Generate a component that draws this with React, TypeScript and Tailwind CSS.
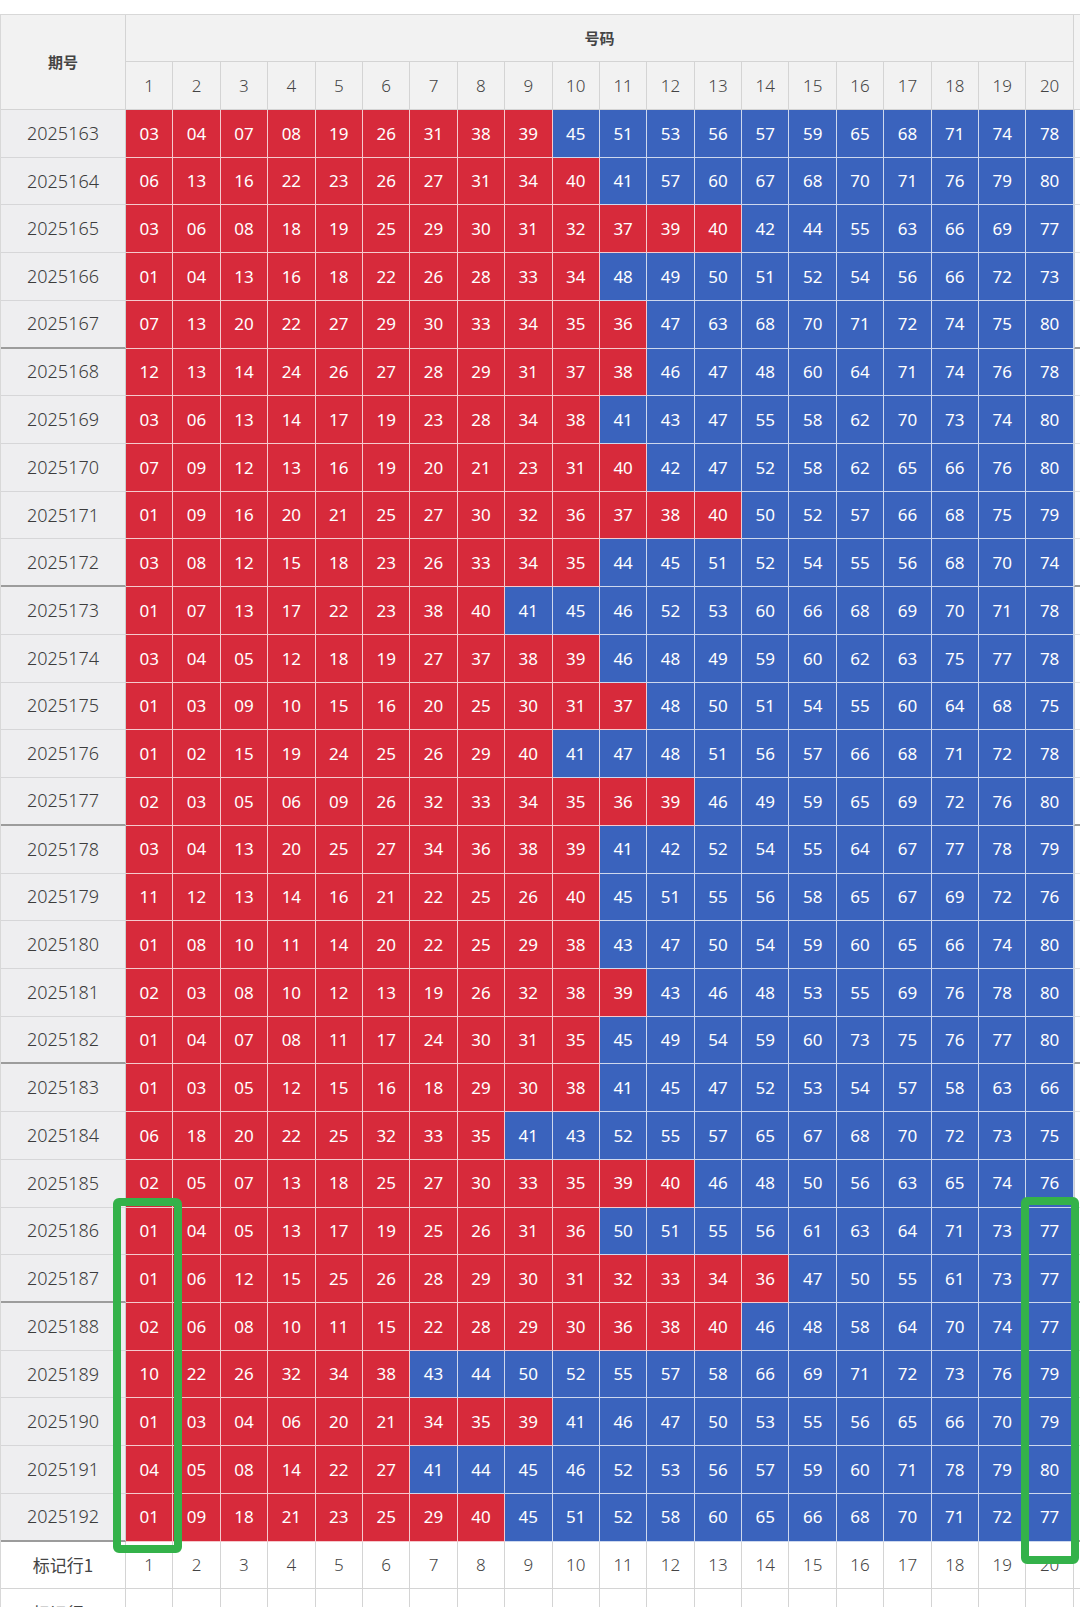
import React from "react";

const draws: [string, string][] = [
  ["2025163", "03 04 07 08 19 26 31 38 39 45 51 53 56 57 59 65 68 71 74 78"],
  ["2025164", "06 13 16 22 23 26 27 31 34 40 41 57 60 67 68 70 71 76 79 80"],
  ["2025165", "03 06 08 18 19 25 29 30 31 32 37 39 40 42 44 55 63 66 69 77"],
  ["2025166", "01 04 13 16 18 22 26 28 33 34 48 49 50 51 52 54 56 66 72 73"],
  ["2025167", "07 13 20 22 27 29 30 33 34 35 36 47 63 68 70 71 72 74 75 80"],
  ["2025168", "12 13 14 24 26 27 28 29 31 37 38 46 47 48 60 64 71 74 76 78"],
  ["2025169", "03 06 13 14 17 19 23 28 34 38 41 43 47 55 58 62 70 73 74 80"],
  ["2025170", "07 09 12 13 16 19 20 21 23 31 40 42 47 52 58 62 65 66 76 80"],
  ["2025171", "01 09 16 20 21 25 27 30 32 36 37 38 40 50 52 57 66 68 75 79"],
  ["2025172", "03 08 12 15 18 23 26 33 34 35 44 45 51 52 54 55 56 68 70 74"],
  ["2025173", "01 07 13 17 22 23 38 40 41 45 46 52 53 60 66 68 69 70 71 78"],
  ["2025174", "03 04 05 12 18 19 27 37 38 39 46 48 49 59 60 62 63 75 77 78"],
  ["2025175", "01 03 09 10 15 16 20 25 30 31 37 48 50 51 54 55 60 64 68 75"],
  ["2025176", "01 02 15 19 24 25 26 29 40 41 47 48 51 56 57 66 68 71 72 78"],
  ["2025177", "02 03 05 06 09 26 32 33 34 35 36 39 46 49 59 65 69 72 76 80"],
  ["2025178", "03 04 13 20 25 27 34 36 38 39 41 42 52 54 55 64 67 77 78 79"],
  ["2025179", "11 12 13 14 16 21 22 25 26 40 45 51 55 56 58 65 67 69 72 76"],
  ["2025180", "01 08 10 11 14 20 22 25 29 38 43 47 50 54 59 60 65 66 74 80"],
  ["2025181", "02 03 08 10 12 13 19 26 32 38 39 43 46 48 53 55 69 76 78 80"],
  ["2025182", "01 04 07 08 11 17 24 30 31 35 45 49 54 59 60 73 75 76 77 80"],
  ["2025183", "01 03 05 12 15 16 18 29 30 38 41 45 47 52 53 54 57 58 63 66"],
  ["2025184", "06 18 20 22 25 32 33 35 41 43 52 55 57 65 67 68 70 72 73 75"],
  ["2025185", "02 05 07 13 18 25 27 30 33 35 39 40 46 48 50 56 63 65 74 76"],
  ["2025186", "01 04 05 13 17 19 25 26 31 36 50 51 55 56 61 63 64 71 73 77"],
  ["2025187", "01 06 12 15 25 26 28 29 30 31 32 33 34 36 47 50 55 61 73 77"],
  ["2025188", "02 06 08 10 11 15 22 28 29 30 36 38 40 46 48 58 64 70 74 77"],
  ["2025189", "10 22 26 32 34 38 43 44 50 52 55 57 58 66 69 71 72 73 76 79"],
  ["2025190", "01 03 04 06 20 21 34 35 39 41 46 47 50 53 55 56 65 66 70 79"],
  ["2025191", "04 05 08 14 22 27 41 44 45 46 52 53 56 57 59 60 71 78 79 80"],
  ["2025192", "01 09 18 21 23 25 29 40 45 51 52 58 60 65 66 68 70 71 72 77"],
];

const cols = Array.from({ length: 20 }, (_, i) => i + 1);

export default function App() {
  return (
    <div className="relative h-[1607px] w-[1080px] overflow-hidden bg-white pt-[14px] font-['Noto_Sans','Noto_Sans_CJK_SC',sans-serif] font-light">
      <div className="grid w-[1160px] grid-cols-[125px_repeat(20,47.4px)_88px] grid-rows-[47px_48px_repeat(30,47.73px)_47.6px_47.6px] border-l border-t border-[#d8d8d8]">
        <div className="row-span-2 flex items-center justify-center border-b border-r border-[#d4d4d4] bg-[#f2f2f2] font-['Noto_Sans_CJK_SC',sans-serif] text-[15px] font-bold text-[#444]">期号</div>
        <div className="col-span-20 flex items-center justify-center border-b border-r border-[#d4d4d4] bg-[#f2f2f2] font-['Noto_Sans_CJK_SC',sans-serif] text-[15px] font-bold text-[#444]">号码</div>
        <div className="row-span-2 border-b border-[#d4d4d4] bg-[#f4f4f4]" />
        {cols.map((c) => (
          <div key={c} className="flex items-center justify-center border-b border-r border-[#d4d4d4] bg-[#f2f2f2] text-[17px] text-[#444]">{c}</div>
        ))}

        {draws.map(([issue, nums], i) => {
          const groupEnd = i % 5 === 4;
          return (
            <React.Fragment key={issue}>
              <div className={`flex items-center justify-center border-r border-[#cfcfcf] bg-[#eeeef0] text-[18px] text-[#3c3c3c] ${groupEnd ? "border-b-2 border-b-[#9c9c9c]" : "border-b border-b-[#d6d6d8]"}`}>{issue}</div>
              {nums.split(" ").map((n, j) => (
                <div key={j} className={`flex items-center justify-center border-b-[1.5px] border-r-[1.5px] border-white/75 text-[17px] font-normal text-white ${Number(n) <= 40 ? "bg-[#d72a3b]" : "bg-[#3a63bd]"}`}>{n}</div>
              ))}
              <div className={`border-l border-[#cfcfcf] bg-white ${groupEnd ? "border-b-2 border-b-[#9c9c9c]" : "border-b border-b-[#e2e2e2]"}`} />
            </React.Fragment>
          );
        })}

        <div className="flex items-center justify-center border-b border-r border-[#d4d4d4] bg-white font-['Noto_Sans_CJK_SC',sans-serif] text-[17px] font-normal text-[#444]">标记行1</div>
        {cols.map((c) => (
          <div key={c} className="flex items-center justify-center border-b border-r border-[#d4d4d4] bg-white text-[17px] text-[#444]">{c}</div>
        ))}
        <div className="border-b border-[#d4d4d4] bg-white" />

        <div className="flex items-center justify-center border-r border-[#d4d4d4] bg-white font-['Noto_Sans_CJK_SC',sans-serif] text-[17px] font-normal text-[#444]">标记行2</div>
        {cols.map((c) => (
          <div key={c} className="border-r border-[#d4d4d4] bg-white" />
        ))}
        <div className="bg-white" />
      </div>

      <div className="absolute left-[113px] top-[1198px] h-[355px] w-[69px] rounded-[6px] border-[8px] border-[#34b24a]" />
      <div className="absolute left-[1021px] top-[1197px] h-[367px] w-[58px] rounded-[6px] border-[8px] border-[#34b24a]" />
    </div>
  );
}
